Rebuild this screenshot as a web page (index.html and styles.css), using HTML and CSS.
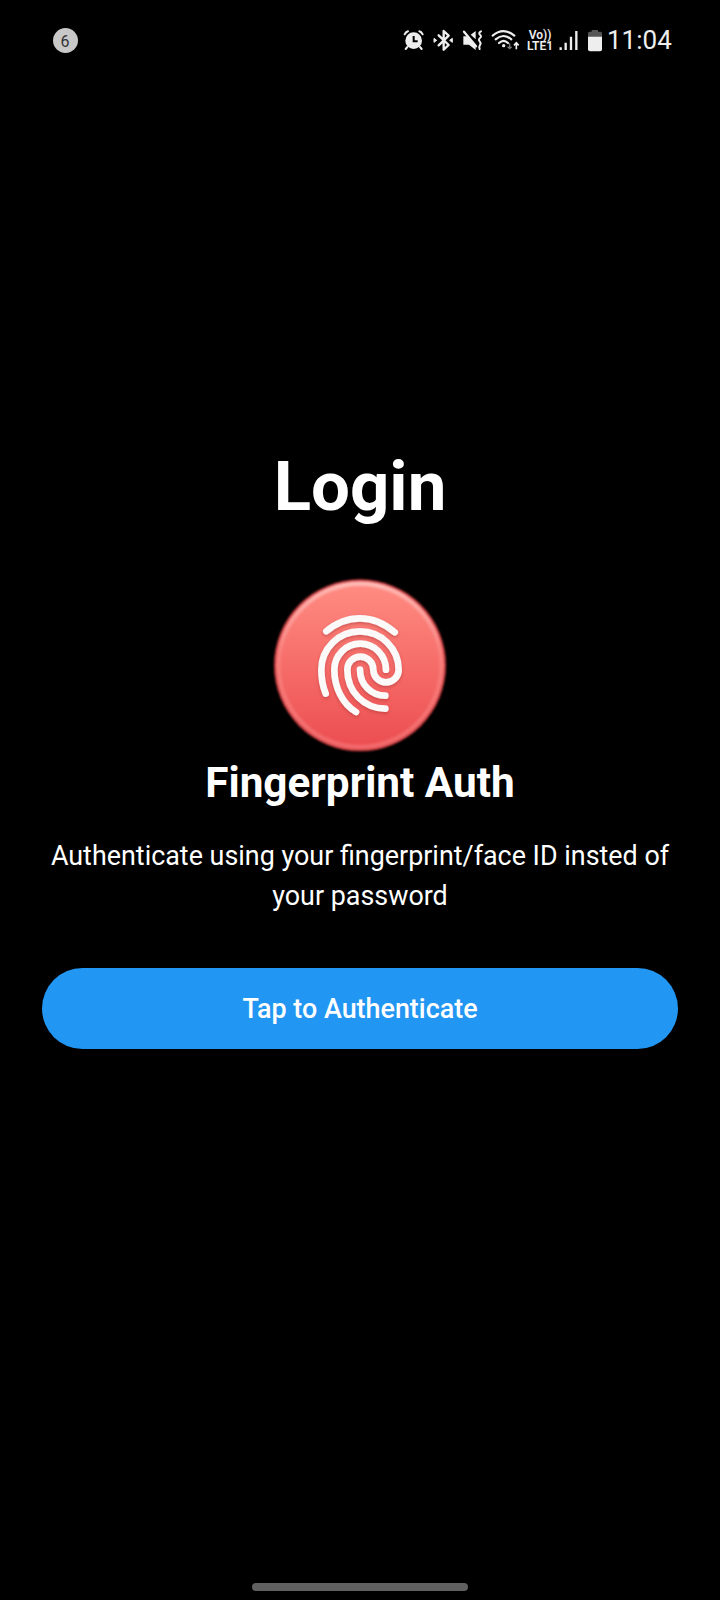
FILE: index.html
```html
<!DOCTYPE html>
<html lang="en">
<head>
<meta charset="utf-8">
<title>Login</title>
<link rel="stylesheet" href="styles.css">
</head>
<body>
<div class="screen">
  <header class="status">
    <span class="count">6</span>
    <div class="indicators">
      <svg class="alarm" viewBox="24 0 66 120"><circle cx="56" cy="62" r="25" fill="#eee"/><path d="M29 43q3-7 10-9M73 34q7 2 10 9M37 81l-5 6M75 81l5 6" fill="none" stroke="#eee" stroke-width="6" stroke-linecap="round"/><path d="M56 48v16h12" fill="none" stroke="#000" stroke-width="6"/></svg>
      <svg class="bluetooth" viewBox="114 0 60 120"><path d="M131 46l30 29-15 14V33l15 14-30 29" fill="none" stroke="#eee" stroke-width="7" stroke-linejoin="round" stroke-linecap="round"/><path d="M117 55l8 6-8 6zM172 55l-8 6 8 6z" fill="#eee" stroke="#eee" stroke-width="3"/></svg>
      <svg class="mute" viewBox="201 0 66 120"><path d="M205 49h10l27 28v13l-20-16h-17zM242 33v25L227 44z" fill="#eee"/><path d="M207 35l36 44" stroke="#eee" stroke-width="7" stroke-linecap="round"/><path d="M258 34q-9 5-3 10t0 10-1 10 1 11-1 12" fill="none" stroke="#eee" stroke-width="6" stroke-linecap="round"/></svg>
      <svg class="wifi" viewBox="288 0 90 120"><path d="M293 47q32-27 65 0M302 58q23-20 47 0M312 69q14-13 27 0" fill="none" stroke="#eee" stroke-width="6.500" stroke-linecap="round"/><circle cx="326" cy="77" r="5" fill="#eee"/><path d="M344 70v16m-6-6l6 6 6-6" fill="none" stroke="#777" stroke-width="4"/><path d="M364 88V70m-7 6l7-8 7 8" fill="none" stroke="#eee" stroke-width="5"/></svg>
      <div class="volte"><span>Vo))</span><span>LTE1</span></div>
      <svg class="signal" viewBox="129 0 63 120"><path d="M137 82v8M152 68v22M168 50v40M184 33v57" stroke="#eee" stroke-width="7"/></svg>
      <svg class="battery" viewBox="216 0 48 120"><path d="M230 30h19v5h8q4 0 4 5v12h-42V40q0-5 4-5h7z" fill="#555"/><path d="M219 50h42v38q0 6-6 6h-30q-6 0-6-6z" fill="#eee"/></svg>
      <time class="clock">11:04</time>
    </div>
  </header>
  <main class="login">
    <h1 class="title">Login</h1>
    <svg class="fingerprint" viewBox="0 0 600 570">
      <defs>
        <linearGradient id="face" x1="0" y1="0" x2="0" y2="1"><stop offset="0" stop-color="#ff8c82"/><stop offset="1" stop-color="#ec4d50"/></linearGradient>
        <linearGradient id="rim" x1="0" y1="0" x2="0" y2="1"><stop offset="0" stop-color="#ffb8b3"/><stop offset=".4" stop-color="#fa817d"/><stop offset="1" stop-color="#f2686a"/></linearGradient>
        <filter id="shade" x="-20%" y="-20%" width="140%" height="140%"><feDropShadow dx="0" dy="5" stdDeviation="4" flood-color="#a52e32" flood-opacity=".5"/></filter>
        <filter id="soft"><feGaussianBlur stdDeviation="3"/></filter>
      </defs>
      <circle cx="300" cy="286" r="258" fill="#c53c40" filter="url(#soft)"/>
      <circle cx="300" cy="286" r="247" fill="url(#face)"/>
      <circle cx="300" cy="286" r="245" fill="none" stroke="url(#rim)" stroke-width="14" filter="url(#soft)"/>
      <g fill="none" stroke="#fcf9f9" stroke-width="20" stroke-linecap="round" filter="url(#shade)">
        <path d="M199 184Q244 145 300 145T404 187"/>
        <path d="M197 371C187 345 184 325 184 299A116 115 0 0 1 416 299A38 38 0 0 1 340 299A39 39 0 0 0 262 299C262 365 311 415 376 416"/>
        <path d="M378 299A77.500 78 0 0 0 223 299C223 352 248 402 288 426"/>
        <path d="M300 299C300 345 335 377 376 377"/>
      </g>
    </svg>
    <h2 class="subtitle">Fingerprint Auth</h2>
    <p class="text">Authenticate using your fingerprint/face ID insted of your password</p>
    <button class="action">Tap to Authenticate</button>
  </main>
  <footer class="nav"><div class="handle"></div></footer>
</div>
</body>
</html>
```
FILE: styles.css
```css
body {
  margin: 0;
  background: #000;
  color: #fff;
  font-family: Roboto, sans-serif;
}
.screen {
  display: flex;
  flex-direction: column;
  height: 1600px;
  background: #000;
}
.status {
  display: flex;
  justify-content: space-between;
  align-items: center;
  height: 40px;
  padding: 20px 49px 0 52.500px;
  color: #eee;
}
.count {
  width: 25px;
  height: 25px;
  border-radius: 50%;
  background: #c8c8c8;
  color: #333;
  font-size: 16px;
  line-height: 27px;
  text-align: center;
}
.indicators {
  display: flex;
  align-items: center;
  width: 268px;
}
.indicators svg {
  height: 40px;
  flex: none;
}
.alarm { width: 22px; margin-right: 8px; }
.bluetooth { width: 20px; margin-right: 9px; }
.mute { width: 22px; margin-right: 7px; }
.wifi { width: 30px; margin-right: 6px; }
.volte {
  display: flex;
  flex-direction: column;
  align-items: center;
  width: 26px;
  margin-right: 5px;
  padding-top: 2px;
  font-size: 12px;
  font-weight: 600;
  line-height: 11px;
}
.signal { width: 21px; margin-right: 8px; }
.battery { width: 16px; margin-right: 4px; }
.clock {
  font-size: 26px;
  line-height: 40px;
}
.login {
  display: flex;
  flex-direction: column;
  align-items: center;
  padding: 386px 42px 0;
}
.title {
  margin: 0;
  font-size: 69px;
  line-height: 82px;
}
.fingerprint {
  width: 200px;
  height: 190px;
  margin-top: 42px;
}
.subtitle {
  margin: -2px 0 0;
  font-size: 42.300px;
  line-height: 50px;
}
.text {
  margin: 28px 0 0;
  font-size: 26.900px;
  line-height: 40px;
  text-align: center;
}
.action {
  width: 636px;
  height: 81px;
  margin-top: 52px;
  padding: 0;
  border: 0;
  border-radius: 41px;
  background: #2196f3;
  color: #fff;
  font: 500 26.900px/80px Roboto, sans-serif;
}
.nav {
  display: flex;
  justify-content: center;
  margin-top: auto;
  padding-bottom: 9px;
}
.handle {
  width: 216px;
  height: 8px;
  border-radius: 4px;
  background: #606060;
}
```
